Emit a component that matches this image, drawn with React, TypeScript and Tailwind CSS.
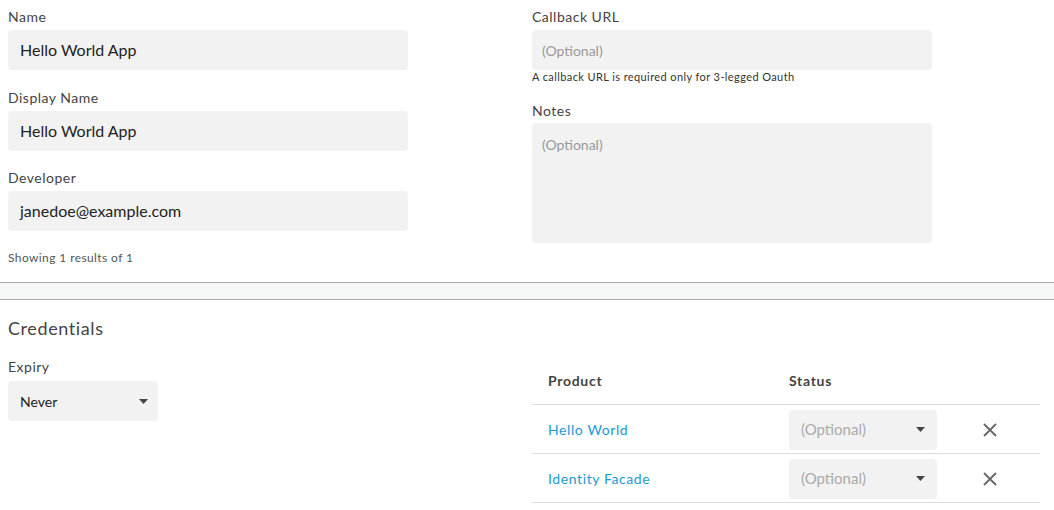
import React from "react";

const font = { fontFamily: "Lato, 'Open Sans', sans-serif" };

function Caret() {
  return (
    <svg width="9" height="5" viewBox="0 0 9 5" className="shrink-0">
      <path d="M0 0 L9 0 L4.5 5 Z" fill="#444" />
    </svg>
  );
}

function Field({ label, value }: { label: string; value: string }) {
  return (
    <div>
      <div className="h-5 text-[14px] leading-5 text-[#444] tracking-[0.5px] mb-[3px]">{label}</div>
      <div className="h-10 w-[400px] rounded-[4px] bg-[#f2f2f2] px-3 flex items-center text-[16px] text-[#222]">
        {value}
      </div>
    </div>
  );
}

const products = ["Hello World", "Identity Facade"];

export default function App() {
  return (
    <div className="w-[1054px] h-[510px] bg-white overflow-hidden" style={font}>
      {/* App details */}
      <div className="flex pt-[7px]">
        <div className="w-[532px] pl-2 flex flex-col gap-[17.5px]">
          <Field label="Name" value="Hello World App" />
          <Field label="Display Name" value="Hello World App" />
          <div>
            <Field label="Developer" value="janedoe@example.com" />
            <div className="mt-[19px] text-[12px] leading-4 text-[#555] tracking-[0.4px]">
              Showing 1 results of 1
            </div>
          </div>
        </div>
        <div className="w-[400px]">
          <div className="h-5 text-[14px] leading-5 text-[#444] tracking-[0.5px] mb-[3px]">Callback URL</div>
          <div className="h-10 rounded-[4px] bg-[#f2f2f2] px-[10px] flex items-center text-[14px] text-[#999]">
            (Optional)
          </div>
          <div className="text-[11px] leading-[14px] text-[#333] tracking-[0.4px]">
            A callback URL is required only for 3-legged Oauth
          </div>
          <div className="mt-[17px] h-5 text-[14px] leading-5 text-[#444] tracking-[0.5px] mb-[2px]">Notes</div>
          <div className="h-[120px] rounded-[4px] bg-[#f2f2f2] px-[10px] pt-[12px] text-[14px] leading-5 text-[#999]">
            (Optional)
          </div>
        </div>
      </div>

      {/* divider */}
      <div className="mt-[16px] h-[18px] border-y border-[#aaa] bg-[#f6f7f7]" />

      {/* Credentials */}
      <div className="flex">
        <div className="w-[532px] pl-2">
          <div className="mt-[16px] h-6 text-[18px] leading-6 text-[#444] tracking-[0.6px]">
            Credentials
          </div>
          <div className="mt-[17px] h-5 text-[14px] leading-5 text-[#444] tracking-[0.5px] mb-[4px]">Expiry</div>
          <div className="h-10 w-[150px] rounded-[4px] bg-[#f2f2f2] pl-3 pr-[10px] flex items-center justify-between text-[14px] text-[#222]">
            <span>Never</span>
            <Caret />
          </div>
        </div>
        <div className="w-[508px] mt-[57px]">
          <div className="h-12 flex items-center border-b border-[#ddd] text-[14px] font-bold text-[#444] tracking-[0.7px]">
            <div className="w-[257px] pl-4">Product</div>
            <div>Status</div>
          </div>
          {products.map((p) => (
            <div key={p} className="h-[49px] pt-px flex items-center border-b border-[#ddd] text-[14px]">
              <div className="w-[257px] pl-4 text-[#1a9bd2] tracking-[0.6px]">{p}</div>
              <div className="h-10 w-[148px] rounded-[4px] bg-[#f2f2f2] pl-3 pr-[12px] flex items-center justify-between text-[15px] text-[#aaa]">
                <span>(Optional)</span>
                <Caret />
              </div>
              <div className="flex-1 flex justify-center pl-[2px]">
                <svg width="16" height="16" viewBox="0 0 16 16">
                  <path d="M2 2 L14 14 M14 2 L2 14" stroke="#666" strokeWidth="1.8" />
                </svg>
              </div>
            </div>
          ))}
        </div>
      </div>
    </div>
  );
}
